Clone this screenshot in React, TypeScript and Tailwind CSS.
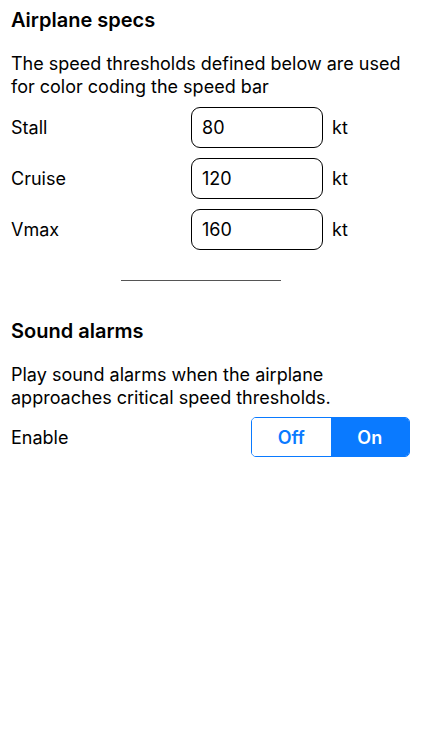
export default function App() {
  const rows = [
    { label: "Stall", value: "80" },
    { label: "Cruise", value: "120" },
    { label: "Vmax", value: "160" },
  ];

  return (
    <div className="min-h-[750px] w-[422px] bg-white text-black font-['Inter','Liberation_Sans',sans-serif]">
      <div className="px-[11px] pt-[8px]">
        <h1 className="text-[20px] leading-[24px] font-semibold">Airplane specs</h1>

        <p className="mt-[20px] text-[18px] leading-[23px]">
          The speed thresholds defined below are used for color coding the speed bar
        </p>

        <div className="mt-[9px] flex flex-col gap-[10px]">
          {rows.map((r) => (
            <div key={r.label} className="flex items-center">
              <div className="w-[180px] text-[18px]">{r.label}</div>
              <div className="w-[132px] h-[41px] border border-black rounded-[9px] flex items-center px-[10px] text-[18px]">
                {r.value}
              </div>
              <div className="ml-[9px] text-[18px]">kt</div>
            </div>
          ))}
        </div>
      </div>

      <div className="mt-[30px] ml-[121px] w-[160px] h-px bg-[#555]" />

      <div className="px-[11px]">
        <h2 className="mt-[38px] text-[20px] leading-[24px] font-semibold">Sound alarms</h2>

        <p className="mt-[20px] text-[18px] leading-[23px]">
          Play sound alarms when the airplane approaches critical speed thresholds.
        </p>

        <div className="mt-[8px] flex items-center justify-between">
          <div className="text-[18px]">Enable</div>
          <div className="mr-[1px] flex w-[159px] h-[40px] border border-[#0a7aff] rounded-[5px] overflow-hidden text-[18px] font-semibold">
            <div className="flex-1 flex items-center justify-center text-[#0a7aff] bg-white">Off</div>
            <div className="flex-1 flex items-center justify-center text-white bg-[#0a7aff]">On</div>
          </div>
        </div>
      </div>
    </div>
  );
}
